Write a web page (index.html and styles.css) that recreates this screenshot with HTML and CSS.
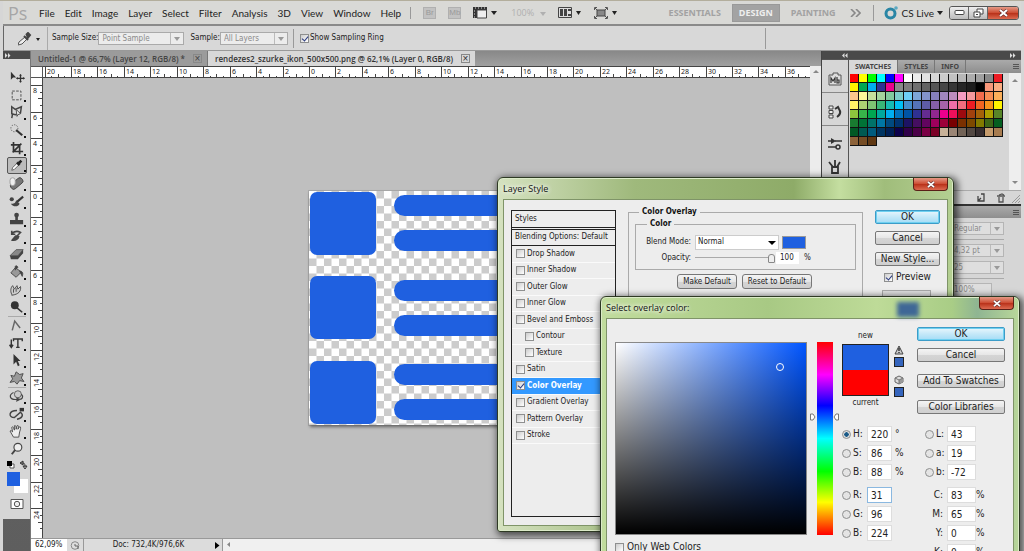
FILE: index.html
```html
<!DOCTYPE html>
<html lang="en">
<head>
<meta charset="utf-8">
<title>Photoshop</title>
<link rel="stylesheet" href="styles.css">
</head>
<body>
<div class="app">
  <header class="menubar">
    <span class="logo">Ps</span>
    <nav class="menu">
      <button>File</button><button>Edit</button><button>Image</button><button>Layer</button><button>Select</button><button>Filter</button><button>Analysis</button><button>3D</button><button>View</button><button>Window</button><button>Help</button>
    </nav>
    <div class="launchers">
      <span class="chip">Br</span>
      <span class="chip">Mb</span>
      <svg class="extras" width="26" height="12" viewBox="0 0 26 12"><path d="M0 0h14v3H4v8H0z" fill="#333"/><path d="M4 3h9.500v8H4z" fill="#eee" stroke="#444"/><path d="M2 1h1m2 0h1m2 0h1m2 0h1M1 4h1M1 7h1M1 10h1" stroke="#ddd"/><path d="M18 4h6l-3 4z" fill="#222"/></svg>
      <span class="zoomlevel">100% <i class="tri"></i></span>
      <svg class="arrange" width="24" height="12" viewBox="0 0 24 12"><path d="M.5.500h13v10H.5z" fill="#ddd" stroke="#444"/><path d="M2 2h3v7H2zM6 2h3v7H6z" fill="#444"/><path d="M10 3h3M10 8h3" stroke="#444" stroke-width="2"/><path d="M18 4h5l-2.500 4z" fill="#222"/></svg>
      <svg class="screen" width="24" height="12" viewBox="0 0 24 12"><path d="M3 3h8v6H3z" fill="#888" stroke="#444"/><path d="M.5 3V.5H3M11 .5h2.500V3M.5 9v2.500H3M11 11.500h2.500V9M1 1l2 2M13 1l-2 2M1 11l2-2M13 11l-2-2" fill="none" stroke="#555"/><path d="M18 4h5l-2.500 4z" fill="#222"/></svg>
    </div>
    <div class="spaces">
      <button>ESSENTIALS</button><button class="current">DESIGN</button><button>PAINTING</button>
      <svg width="11" height="8" viewBox="0 0 11 8"><path d="M1 0l4 4-4 4M6 0l4 4-4 4" fill="none" stroke="#888" stroke-width="1.600"/></svg>
    </div>
    <button class="cslive">
      <svg width="14" height="14" viewBox="0 0 14 14"><circle cx="6.500" cy="7.500" r="4.500" fill="none" stroke="#2a86a5" stroke-width="3"/><circle cx="12" cy="2" r="1.800" fill="#5ba9c2"/></svg>
      CS Live <i class="tri dark"></i>
    </button>
    <div class="winbtns">
      <button aria-label="Minimize"><svg width="11" height="7" viewBox="0 0 11 7"><rect x="1" y="1.500" width="9" height="4" rx="1" fill="#fff" stroke="#444"/></svg></button>
      <button aria-label="Restore"><svg width="11" height="10" viewBox="0 0 11 10"><path d="M4 1h6v5H4z" fill="#fff" stroke="#444"/><path d="M1 4h6v5H1z" fill="#fff" stroke="#444"/><path d="M3 6h2v1H3z" fill="#444"/></svg></button>
      <button class="close" aria-label="Close"><svg width="9" height="8" viewBox="0 0 9 8"><path d="M1 1l7 6M8 1L1 7" stroke="#603030" stroke-width="3.200"/><path d="M1 1l7 6M8 1L1 7" stroke="#fff" stroke-width="2"/></svg></button>
    </div>
  </header>

  <div class="options">
    <div class="optool"><svg width="22" height="14" viewBox="0 0 22 14"><path d="M0 13l1-3 6-5 2 2-5 5z" fill="#eee" stroke="#555"/><path d="M6 4l4 4M8 3l2-2 2 2-3 4" stroke="#444" stroke-width="2" fill="#444"/><path d="M18 6h4l-2 3z" fill="#222"/></svg></div>
    <label for="size">Sample Size:</label>
    <span class="dd wide"><select id="size"><option>Point Sample</option></select></span>
    <label class="sp" for="sample">Sample:</label>
    <span class="dd"><select id="sample"><option>All Layers</option></select></span>
    <div class="ring"><input type="checkbox" id="ring" checked><label for="ring">Show Sampling Ring</label></div>
    <span class="optend"></span>
  </div>

  <main class="work">
    <aside class="tools">
      <div class="darkbar"><svg width="6" height="5" viewBox="0 0 6 5"><path d="M0 0l2.500 2.500L0 5zM3 0l2.500 2.500L3 5z" fill="#ddd"/></svg></div>
      <div class="toolgrid" id="toolgrid">
        <button aria-label="Move"><svg viewBox="0 0 20 16"><path d="M3 2v9l2.500-2.500H9z" fill="#333"/><path d="M14 5v9M9.500 9.500h9" stroke="#333" stroke-width="1.500"/><path d="M12.500 6.500L14 4.500l1.500 2zM12.500 12.500l1.500 2 1.500-2zM11 8l-2 1.500 2 1.500zM17 8l2 1.500-2 1.500z" fill="#333"/></svg></button>
        <button class="more" aria-label="Marquee"><svg viewBox="0 0 20 16"><path d="M4.500 3.500h10v10h-10z" fill="none" stroke="#444" stroke-dasharray="3 1.500"/></svg></button>
        <button class="more" aria-label="Lasso"><svg viewBox="0 0 20 16"><path d="M4 2l4 3 7-3-1 7-6 2-4-1zM5 10l-1 5" fill="none" stroke="#444" stroke-width="1.700"/><path d="M9 5l5 5-3 1-1 2z" fill="#eee" stroke="#444"/></svg></button>
        <button class="more" aria-label="Quick selection"><svg viewBox="0 0 20 16"><circle cx="7" cy="6" r="4" fill="none" stroke="#555" stroke-dasharray="1.500 1.500"/><path d="M9 8l7 6" stroke="#333" stroke-width="2.400"/></svg></button>
        <button class="more" aria-label="Crop"><svg viewBox="0 0 20 16"><path d="M6 1v11h11M3 4.500h10V15M5 13L15 3" fill="none" stroke="#333" stroke-width="1.900"/></svg></button>
        <button class="more on" aria-label="Eyedropper"><svg viewBox="0 0 20 16"><path d="M4 14l1-3 5-5 2 2-5 5z" fill="#fff" stroke="#555"/><path d="M10 5l3 3M12 6l3-3" stroke="#222" stroke-width="3"/></svg></button>
        <button class="more" aria-label="Healing"><svg viewBox="0 0 20 16"><rect x="2" y="5" width="16" height="7" rx="3" transform="rotate(-40 10 9)" fill="#777" stroke="#444"/><rect x="2" y="2" width="6" height="9" rx="3" fill="#eee" stroke="#999"/></svg></button>
        <button class="more" aria-label="Brush"><svg viewBox="0 0 20 16"><path d="M17 3l-7 6" stroke="#333" stroke-width="2.400"/><path d="M3 11c3 4 8 4 10 0L9 7c-1 4-3 4-6 4z" fill="#444"/><circle cx="4" cy="6" r="2.400" fill="#444"/></svg></button>
        <button class="more" aria-label="Stamp"><svg viewBox="0 0 20 16"><path d="M2 9h15v5H2zM8 4h3v5H8z" fill="#444"/><circle cx="9.500" cy="3.500" r="2.700" fill="#444"/></svg></button>
        <button class="more" aria-label="History brush"><svg viewBox="0 0 20 16"><path d="M4 5c4-3 7-3 10-1l-8 8M4 2v4h4" fill="none" stroke="#444" stroke-width="1.900"/><path d="M3 13c4 2 9 0 10-5L8 7z" fill="#444"/></svg></button>
        <button class="more" aria-label="Eraser"><svg viewBox="0 0 20 16"><path d="M2 10l7-7h8l-6 7z" fill="#888" stroke="#555"/><path d="M2 10h9v4H3zM11 10l6-7v4l-6 7z" fill="#444"/></svg></button>
        <button class="more" aria-label="Paint bucket"><svg viewBox="0 0 20 16"><path d="M3 9l5-6 7 5-6 6z" fill="#999" stroke="#444"/><path d="M8 6V2c0-2 3-1 3 1M13 7c4 0 4 3 3 6l-2-4z" fill="#444" stroke="#444"/></svg></button>
        <button class="more" aria-label="Smudge"><svg viewBox="0 0 20 16"><path d="M4 13c-2-4-1-8 1-10l2 4 3-4 1 4 3-3c1 5-2 9-10 10z" fill="#ccc" stroke="#444"/><path d="M6 7v4M9 6v4" stroke="#444"/></svg></button>
        <button class="more" aria-label="Burn"><svg viewBox="0 0 20 16"><circle cx="7.500" cy="6" r="4.500" fill="#333"/><path d="M10 9l6 5" stroke="#333" stroke-width="1.800"/></svg></button>
        <button class="more cut" aria-label="Pen"><svg viewBox="0 0 20 16"><path d="M6 14V3l8 6" fill="none" stroke="#666" stroke-width="1.700" transform="rotate(15 9 8)"/></svg></button>
        <button class="more" aria-label="Type"><svg viewBox="0 0 20 16"><path d="M3.500 4v9m-2-3l2 3 2-3M6 6V3.500h10V6M11 3.500v9.500M9 13h4" fill="none" stroke="#333" stroke-width="1.600"/></svg></button>
        <button class="more" aria-label="Path selection"><svg viewBox="0 0 20 16"><path d="M6 1v12l3-3 2 5 2-1-2-5h3z" fill="#333"/></svg></button>
        <button class="more" aria-label="Shape"><svg viewBox="0 0 20 16"><path d="M3 5l4 1 2-5 4 3 4-1-2 5 3 4-5-1-3 4-3-3-5 1 3-4z" fill="#999" stroke="#444" stroke-linejoin="round"/></svg></button>
        <button class="more cut" aria-label="3D rotate"><svg viewBox="0 0 20 16"><circle cx="11" cy="6" r="4" fill="#ccc" stroke="#555"/><path d="M6 4C0 7 2 12 8 12h4m-3-2l4 2-4 2M15 6c3 3 1 6-3 6" fill="none" stroke="#444" stroke-width="1.400"/></svg></button>
        <button class="more" aria-label="3D camera"><svg viewBox="0 0 20 16"><path d="M10 4C0 4 0 12 7 12l7-6c4 3 2 7-4 8" fill="none" stroke="#444" stroke-width="1.600"/><path d="M13 1h5v4h-5z" fill="#333"/></svg></button>
        <button class="more" aria-label="Hand"><svg viewBox="0 0 20 16"><path d="M6 15L2 8c1-1 2 0 3 1L4 4c1-2 2 0 3 3V2c1-1 2 0 2 4l1-4c2-1 2 1 1 4l2-3c2 0 1 3 0 6l-1 6z" fill="#eee" stroke="#444"/></svg></button>
        <button aria-label="Zoom"><svg viewBox="0 0 20 16"><circle cx="11" cy="6" r="4.500" fill="#eee" stroke="#444" stroke-width="1.300"/><path d="M8 9l-4 5" stroke="#444" stroke-width="2.200"/></svg></button>
      </div>
      <div class="colors">
        <svg width="22" height="50" viewBox="0 0 22 50"><path d="M3 4h4v4H3z" fill="#fff" stroke="#555"/><path d="M0 1h5v5H0z" fill="#000"/><path d="M14 3h2c2 0 2 2 2 4M13 3l3-2v4zM16 6h4l-2 3z" fill="none" stroke="#333"/><path d="M7 19h14v14H7z" fill="#fff"/><path d="M0 12h13v14H0z" fill="#1f60e0"/><path d="M4 39.500h12v9H4z" fill="#fff" stroke="#555"/><circle cx="10" cy="44" r="2.700" fill="#eee" stroke="#555"/></svg>
      </div>
    </aside>

    <section class="doc">
      <div class="tabs">
        <div class="tab"><span>Untitled-1 @ 66,7% (Layer 12, RGB/8) *</span><button aria-label="Close tab">×</button></div>
        <div class="tab active"><span>rendezes2_szurke_ikon_500x500.png @ 62,1% (Layer 0, RGB/8)</span><button aria-label="Close tab">×</button></div>
      </div>
      <div class="view">
        <div class="corner"></div>
        <svg class="hruler" id="hruler"></svg>
        <svg class="vruler" id="vruler"></svg>
        <div class="canvas">
          <svg class="art" width="234" height="234" viewBox="0 0 234 234">
            <defs><pattern id="chk" width="15" height="15" patternUnits="userSpaceOnUse"><path d="M0 0h15v15H0z" fill="#fff"/><path d="M7.500 0H15v7.500H7.500zM0 7.500h7.500V15H0z" fill="#ccc"/></pattern></defs>
            <rect width="234" height="234" fill="url(#chk)"/>
            <g fill="#1f60e0"><rect x="1" y="1" width="66" height="63" rx="7"/><rect x="1" y="85" width="66" height="63" rx="7"/><rect x="1" y="170" width="66" height="63" rx="7"/>
            <rect x="85" y="4" width="149" height="21" rx="10.500"/><rect x="85" y="39" width="149" height="21" rx="10.500"/><rect x="85" y="89" width="149" height="21" rx="10.500"/><rect x="85" y="124" width="149" height="21" rx="10.500"/><rect x="85" y="173" width="149" height="21" rx="10.500"/><rect x="85" y="208" width="149" height="21" rx="10.500"/></g>
          </svg>
        </div>
        <div class="vscroll"><i class="up"></i></div>
      </div>
      <footer class="status">
        <input aria-label="Zoom" value="62,09%">
        <svg width="16" height="9" viewBox="0 0 16 9"><circle cx="8" cy="4.500" r="3.800" fill="#ddd" stroke="#888"/><path d="M8 3v2h3v3" fill="none" stroke="#666"/></svg>
        <span class="docsize">Doc: 732,4K/976,6K</span>
        <button aria-label="Status menu"><svg width="5" height="7" viewBox="0 0 5 7"><path d="M0 0l4.500 3.500L0 7z" fill="#000"/></svg></button>
        <span class="hscroll"><svg width="3" height="5" viewBox="0 0 3 5"><path d="M3 0L0 2.500 3 5z" fill="#888"/></svg></span>
      </footer>
    </section>

    <aside class="dock">
      <div class="darkbar split"><svg width="6" height="5" viewBox="0 0 6 5"><path d="M2.500 0L0 2.500 2.500 5zM5.500 0L3 2.500 5.500 5z" fill="#ddd"/></svg><svg width="6" height="5" viewBox="0 0 6 5"><path d="M0 0l2.500 2.500L0 5zM3 0l2.500 2.500L3 5z" fill="#ddd"/></svg></div>
      <div class="iconcol">
        <div><svg width="14" height="14" viewBox="0 0 14 14"><path d="M1 3h4V1h5v2h3v10H1z" fill="#ddd" stroke="#555"/><path d="M3 11V6l2 3 2-3v5M9 5v6h2V8H9" fill="none" stroke="#333" stroke-width="1.200"/></svg></div>
        <div><svg width="14" height="14" viewBox="0 0 14 14"><path d="M1 1h4v3H1zM1 5.500h4v3H1zM1 10h4v3H1z" fill="#eee" stroke="#444"/><path d="M7 4l3-2 1 2c2 3 1 6-2 8" fill="none" stroke="#333" stroke-width="2"/></svg></div>
        <div class="two"><svg width="14" height="12" viewBox="0 0 14 12"><path d="M0 3h5M7 3h7M0 9h8" stroke="#333" stroke-width="1.500"/><path d="M3 0l5 3-5 3z" fill="#333"/><circle cx="10" cy="9" r="2" fill="none" stroke="#333" stroke-width="1.500"/></svg><svg width="14" height="14" viewBox="0 0 14 14"><path d="M4 7h6v6H4zM5 7L1 2M7 7V0M9 7l3-5" fill="none" stroke="#333" stroke-width="1.800"/></svg></div>
      </div>
      <div class="panels">
        <div class="ptabs"><button class="active">SWATCHES</button><button>STYLES</button><button>INFO</button><i class="pmenu"></i></div>
        <div class="swatchpanel"><div class="swatches" id="swatches"></div><div class="sscroll"><i class="up"></i><i class="down"></i></div></div>
        <div class="pfoot"><svg width="46" height="10" viewBox="0 0 46 10"><path d="M3 3v5h6V1h-3M3 8l3-3" fill="none" stroke="#444" stroke-width="1.300"/><path d="M22 3h8M24 4v5h4V4M24 2l3-1 2 1" fill="none" stroke="#555" stroke-width="1.300"/><path d="M37 10l8-8M40 10l5-5M43 10l2-2" stroke="#999"/></svg></div>
        <div class="ptabs lower"><i class="pmenu"></i></div>
        <div class="character">
          <span class="dd"><select aria-label="Font style"><option>Regular</option></select></span>
          <hr>
          <span class="dd"><select aria-label="Leading"><option>4,32 pt</option></select></span>
          <span class="dd"><select aria-label="Tracking"><option>25</option></select></span>
          <hr>
          <input aria-label="Horizontal scale" value="100%">
        </div>
      </div>
    </aside>
  </main>

  <section class="dialog layerstyle" aria-label="Layer Style">
    <div class="title"><h2>Layer Style</h2><button class="close" aria-label="Close"><svg width="8" height="7" viewBox="0 0 9 8"><path d="M1 1l7 6M8 1L1 7" stroke="#603030" stroke-width="3.200"/><path d="M1 1l7 6M8 1L1 7" stroke="#fff" stroke-width="2"/></svg></button></div>
    <div class="body">
      <div class="stylelist">
        <div class="shead">Styles</div>
        <div class="sblend">Blending Options: Default</div>
        <div class="sitems">
          <label><input type="checkbox">Drop Shadow</label>
          <label><input type="checkbox">Inner Shadow</label>
          <label><input type="checkbox">Outer Glow</label>
          <label><input type="checkbox">Inner Glow</label>
          <label><input type="checkbox">Bevel and Emboss</label>
          <label class="sub"><input type="checkbox">Contour</label>
          <label class="sub"><input type="checkbox">Texture</label>
          <label><input type="checkbox">Satin</label>
          <label class="sel"><input type="checkbox" checked>Color Overlay</label>
          <label><input type="checkbox">Gradient Overlay</label>
          <label><input type="checkbox">Pattern Overlay</label>
          <label><input type="checkbox">Stroke</label>
        </div>
      </div>
      <fieldset class="outer">
        <legend>Color Overlay</legend>
        <fieldset class="inner">
          <legend>Color</legend>
          <div class="frow"><label for="blend">Blend Mode:</label><span class="blend"><select id="blend"><option>Normal</option></select></span><button class="chipcolor" aria-label="Overlay color"></button></div>
          <div class="frow"><label for="op">Opacity:</label><input type="range" id="op" value="100"><input class="num" aria-label="Opacity value" value="100"><span>%</span></div>
        </fieldset>
        <div class="defaults"><button class="btn small">Make Default</button><button class="btn small">Reset to Default</button></div>
      </fieldset>
      <div class="actions">
        <button class="btn primary">OK</button><button class="btn">Cancel</button><button class="btn">New Style...</button>
        <label class="preview"><input type="checkbox" checked>Preview</label>
        <div class="thumb"></div>
      </div>
    </div>
  </section>

  <section class="dialog picker" aria-label="Select overlay color">
    <div class="title"><h2>Select overlay color:</h2><i class="glass"></i><button class="close" aria-label="Close"><svg width="8" height="7" viewBox="0 0 9 8"><path d="M1 1l7 6M8 1L1 7" stroke="#603030" stroke-width="3.200"/><path d="M1 1l7 6M8 1L1 7" stroke="#fff" stroke-width="2"/></svg></button></div>
    <div class="body">
      <div class="fieldcol">
        <div class="field"><i class="cursor"></i></div>
        <label class="web"><input type="checkbox">Only Web Colors</label>
      </div>
      <div class="hue">
        <svg class="marks" width="29" height="8" viewBox="0 0 29 8"><path d="M.5 1h2.500l2 3-2 3H.5zM28.500 1H26l-2 3 2 3h2.500z" fill="#fff" stroke="#777"/></svg>
      </div>
      <div class="values">
        <div class="top">
          <div class="compare"><span>new</span><div class="chips"><i></i><i></i></div><span>current</span></div>
          <div class="warns">
            <svg width="10" height="10" viewBox="0 0 10 10"><path d="M5 1l4 8H1z" fill="#ccc" stroke="#444"/><path d="M5 3v3M5 7v1" stroke="#222" stroke-width="1.300"/></svg><i></i>
            <svg width="10" height="10" viewBox="0 0 10 10"><path d="M1 3l4-2 4 2v4L5 9 1 7z" fill="#ddd" stroke="#666"/><path d="M5 5v4l4-2V3z" fill="#999"/><path d="M1 3l4 2 4-2M5 5v4" fill="none" stroke="#777"/></svg><i></i>
          </div>
          <div class="pbtns"><button class="btn primary">OK</button><button class="btn">Cancel</button><button class="btn gap">Add To Swatches</button><button class="btn gap">Color Libraries</button></div>
        </div>
        <div class="nums">
          <div class="numcol">
            <div class="nr"><input type="radio" name="c" id="h" checked><label for="h">H:</label><input aria-label="Hue" value="220"><span>°</span></div>
            <div class="nr"><input type="radio" name="c" id="s"><label for="s">S:</label><input aria-label="Saturation" value="86"><span>%</span></div>
            <div class="nr"><input type="radio" name="c" id="b"><label for="b">B:</label><input aria-label="Brightness" value="88"><span>%</span></div>
            <div class="nr brk"><input type="radio" name="c" id="r"><label for="r">R:</label><input class="focus" aria-label="Red" value="31"></div>
            <div class="nr"><input type="radio" name="c" id="g"><label for="g">G:</label><input aria-label="Green" value="96"></div>
            <div class="nr"><input type="radio" name="c" id="bl"><label for="bl">B:</label><input aria-label="Blue" value="224"></div>
          </div>
          <div class="numcol right">
            <div class="nr"><input type="radio" name="c" id="l"><label for="l">L:</label><input aria-label="Lightness" value="43"></div>
            <div class="nr"><input type="radio" name="c" id="la"><label for="la">a:</label><input aria-label="Lab a" value="19"></div>
            <div class="nr"><input type="radio" name="c" id="lb"><label for="lb">b:</label><input aria-label="Lab b" value="-72"></div>
            <div class="nr brk cmyk"><label for="cc">C:</label><input id="cc" value="83"><span>%</span></div>
            <div class="nr cmyk"><label for="cm">M:</label><input id="cm" value="65"><span>%</span></div>
            <div class="nr cmyk"><label for="cy">Y:</label><input id="cy" value="0"><span>%</span></div>
            <div class="nr cmyk"><label for="ck">K:</label><input id="ck" value="0"><span>%</span></div>
          </div>
        </div>
      </div>
    </div>
  </section>
</div>
<script src="script.js"></script>
</body>
</html>
```
FILE: styles.css
```css
* { box-sizing: border-box; }
body { margin: 0; font: 8px/12px "DejaVu Sans Condensed", "DejaVu Sans", sans-serif; color: #222; overflow: hidden; }
button, input, select { font: inherit; color: inherit; margin: 0; padding: 0; border: 0; background: none; border-radius: 0; }
svg { display: block; flex: none; }
.app { position: relative; height: 100vh; overflow: hidden; background: #d6d6d6; display: flex; flex-direction: column; padding: 0 3px; border-top: 1px solid #b3ae9c; }

.menubar { flex: none; display: flex; align-items: center; height: 25px; border-bottom: 2px solid #8a8a8a; background: #d9d9d6; font: 10px/16px Lato, "Open Sans", sans-serif; }
.menubar > * { flex: none; }
.logo { width: 36px; padding-left: 5px; font: 18px/20px "Open Sans", sans-serif; color: #a6a6a6; }
.menu { display: flex; gap: 10px; }
.launchers { display: flex; align-items: center; gap: 12px; margin-left: 9px; padding-left: 12px; border-left: 1px solid #999; }
.chip { width: 13px; height: 12px; background: #c2c2c2; border: 1px solid #b0b0b0; color: #9a9a9a; font: 8px/10px "Liberation Sans", sans-serif; text-align: center; }
.zoomlevel { font: 9px/12px "Open Sans", sans-serif; color: #b0b0b0; white-space: nowrap; }
.tri { display: inline-block; border: 3px solid transparent; border-top: 4px solid #b0b0b0; border-bottom: 0; margin-left: 4px; }
.tri.dark { border-top-color: #222; margin-left: 0; }
.menubar .spaces { margin-left: auto; display: flex; align-items: center; gap: 11px; font: bold 9px/17px "Noto Sans", sans-serif; color: #a2a2a2; }
.spaces .current { background: #a3a3a3; color: #eee; border: 1px solid #999; padding: 0 6px; height: 18px; line-height: 16px; }
.spaces svg { margin-left: 4px; }
.cslive { display: flex; align-items: center; gap: 3px; margin-left: 12px; padding-left: 10px; border-left: 1px solid #999; white-space: nowrap; }
.winbtns { display: flex; margin: 0 2px 0 6px; border: 1px solid #555; border-radius: 3px; overflow: hidden; }
.winbtns button { flex: none; width: 19px; height: 12px; display: grid; place-items: center; background: linear-gradient(#eee, #bbb); border-right: 1px solid #666; }
.winbtns .close { width: 30px; border: 0; }
.close, .winbtns .close { background: linear-gradient(#e59a86, #cc4a30 50%, #b83018 51%, #dc6a50); }

.options { flex: none; display: flex; align-items: center; height: 25px; border-bottom: 1px solid #999; border-left: 1px solid #666; background: #d8d8d8; }
.optool { width: 44px; height: 23px; padding: 5px 0 0 14px; border-right: 1px solid #aaa; margin-right: 4px; }
.dd { position: relative; display: inline-block; width: 68px; height: 13px; border: 1px solid #aaa; background: #ececec; }
.dd.wide { width: 86px; }
.dd select { appearance: none; width: 100%; height: 11px; padding: 0 3px; color: #8a8a8a; display: block; }
.dd::after { content: ""; position: absolute; right: 3px; top: 4px; border: 3px solid transparent; border-top: 4px solid #999; border-bottom: 0; }
.dd::before { content: ""; position: absolute; right: 12px; top: 0; height: 11px; border-left: 1px solid #bbb; }
.sp { margin-left: 6px; }
.ring { display: flex; align-items: center; gap: 1px; height: 19px; margin-left: 5px; padding-left: 6px; border-left: 1px solid #999; }
.optend { margin-left: auto; height: 21px; width: 256px; border-left: 1px solid #999; }
input[type=checkbox] { appearance: none; flex: none; position: relative; width: 9px; height: 9px; border: 1px solid #8e8f8f; background: linear-gradient(135deg, #ccc, #fff); }
input[type=checkbox]:checked::before { content: ""; position: absolute; left: 2px; top: 0; width: 3px; height: 5px; border: solid #2a3a80; border-width: 0 1px 1px 0; transform: rotate(40deg); }

.work { flex: 1; min-height: 0; display: grid; grid-template-columns: 28px 1fr 200px; }
.darkbar { height: 8px; background: #4a4a4a; padding: 2px; }
.darkbar.split { grid-column: 1 / 3; display: flex; justify-content: space-between; padding: 2px 5px 0 20px; }
.tools { background: linear-gradient(#6a6a6a, #5e5e5e); border-right: 1px solid #777; min-height: 0; }
.toolgrid { display: grid; grid-auto-rows: 1fr; height: 399px; padding: 9px 4px 0; background: #d6d6d6; }
.toolgrid button { position: relative; display: grid; place-items: center; margin: 0 1px; }
.toolgrid svg { width: 18px; height: 14px; }
.toolgrid .more::after { content: ""; position: absolute; right: 0; bottom: 1px; border: 1px solid #111; }
.toolgrid .on { border: 1px solid #555; border-radius: 2px; background: #bcbcbc; margin: 0; }
.toolgrid .cut { border-top: 1px solid #aaa; }
.colors { background: #d6d6d6; padding: 2px 0 9px 4px; }

.doc { min-width: 0; display: flex; flex-direction: column; min-height: 0; background: #bfbfbf; }
.tabs { flex: none; display: flex; height: 15px; background: linear-gradient(#888, #a0a0a0); white-space: nowrap; font: 600 8px/14px "Open Sans", sans-serif; }
.tab { display: flex; align-items: center; gap: 8px; padding: 0 5px 0 7px; color: #444; background: #9b9b9b; }
.tab.active { background: #d8d8d8; color: #333; border-left: 1px solid #777; }
.tab button { width: 9px; height: 9px; border: 1px solid #888; font: 10px/6px "Liberation Sans", sans-serif; }
.view { flex: 1; min-height: 0; display: grid; grid-template: 12px 1fr / 12px 1fr 11px; }
.corner { background: #fff; border: solid #555; border-width: 1px 1px 1px 0; }
.hruler, .vruler { width: 100%; height: 100%; min-height: 0; background: #fff; overflow: hidden; }
.hruler { border-top: 1px solid #444; border-bottom: 1px solid #444; }
.vruler { border-right: 1px solid #444; grid-row: 2; grid-column: 1; }
.ruler-text { font: 7px "Noto Sans", sans-serif; fill: #222; }
.canvas { grid-row: 2; grid-column: 2; overflow: hidden; padding: 113px 0 0 266px; }
.art { box-shadow: 1px 2px 3px #666, 0 0 0 1px #aaa; }
.vscroll { grid-row: 1 / 3; grid-column: 3; background: #ececec; padding: 4px 3px; }
.up, .down { display: block; border: 3px solid transparent; border-bottom: 3px solid #888; border-top: 0; }
.down { border-bottom: 0; border-top: 3px solid #888; }
.status { flex: none; display: flex; align-items: center; height: 13px; background: #dcdcdc; border-top: 1px solid #999; }
.status input { width: 36px; height: 12px; background: #fff; padding-left: 4px; }
.docsize { width: 130px; border-left: 1px solid #999; text-align: center; }
.status button { width: 9px; height: 12px; display: grid; place-items: center; }
.hscroll { flex: 1; height: 12px; background: #f0f0f0; border-left: 1px solid #999; padding: 3px 4px; }

.dock { display: grid; grid-template: 8px 1fr / 27px 1fr; min-height: 0; background: #d6d6d6; border-left: 1px solid #444; }
.iconcol { border-right: 1px solid #555; border-top: 1px solid #555; }
.iconcol div { height: 33px; display: flex; flex-direction: column; align-items: center; padding-top: 12px; border-bottom: 1px solid #888; }
.iconcol .two { height: 58px; gap: 10px; }
.panels { min-width: 0; }
.ptabs { display: flex; height: 14px; background: linear-gradient(#aaa, #8e8e8e); font: bold 7px/13px "Noto Sans", sans-serif; color: #444; border-top: 1px solid #555; }
.ptabs button { padding: 0 6px; border-right: 1px solid #777; }
.ptabs .active { background: #d8d8d8; }
.pmenu { margin: 4px 2px 0 auto; width: 6px; height: 5px; border: solid #555; border-width: 1px 0; background: linear-gradient(transparent 1px, #555 1px, #555 2px, transparent 2px); }
.swatchpanel { display: flex; justify-content: space-between; height: 117px; padding-left: 1px; }
.swatches { display: grid; grid-template-columns: repeat(17, 9px); grid-auto-rows: 9px; align-content: start; padding-top: 1px; }
.swatches i { border: solid #111; border-width: 0 1px 1px 0; }
.sscroll { width: 12px; background: #eee; display: flex; flex-direction: column; justify-content: space-between; padding: 6px 3px; }
.pfoot { height: 14px; border-top: 1px solid #aaa; display: flex; justify-content: flex-end; padding-top: 2px; }
.ptabs.lower { border-top: 2px solid #333; }
.character { display: flex; flex-direction: column; align-items: flex-end; padding: 4px 17px 0 0; gap: 4px; }
.character hr { width: 100%; margin: 0; border: 0; border-top: 1px solid #aaa; }
.character .dd, .character > input { width: 54px; border: 1px solid #b5b5b5; background: #dedede; color: #888; }
.character > input { width: 42px; margin-right: 12px; padding-left: 3px; }

.dialog { position: absolute; border: 1px solid #2e3a24; border-radius: 6px 6px 3px 3px; padding: 0 5px 5px; background: #a9c389; box-shadow: 0 0 0 1px #dcebc8 inset, 2px 2px 7px 2px rgba(0,0,0,.6); display: flex; flex-direction: column; }
.layerstyle { left: 497px; top: 176px; width: 457px; height: 355px; background: linear-gradient(90deg, #d5e2c0, #9fb97c 30%, #8eab68 65%, #c4dea0 75%, #a0bd7b 85%, #b4cf92); }
.picker { left: 600px; top: 295px; width: 420px; height: 280px; background: linear-gradient(90deg, #c1dc9d, #a8c984 40%, #bedb98 66%, #a9cd86 84%, #8fb592 90%, #b9d79a); }
.title { display: flex; align-items: center; justify-content: space-between; height: 21px; }
.title h2 { margin: 0; font: 9px/14px "Open Sans", sans-serif; color: #111; text-shadow: 0 0 5px #fff, 0 0 5px #fff; }
.title .close { width: 35px; height: 13px; align-self: flex-start; border: 1px solid #5a2018; border-top: 0; border-radius: 0 0 4px 4px; display: grid; place-items: center; }
.glass { width: 22px; height: 15px; margin: 4px 60px 0 auto; background: #3f6796; filter: blur(2px); }
.dialog .body { flex: 1; min-height: 0; display: flex; background: #ededed; border: 1px solid #7f9468; padding: 9px 7px 8px 7px; }
.btn { height: 14px; border: 1px solid #777; border-radius: 2px; background: linear-gradient(#f4f4f4, #e6e6e6 50%, #d5d5d5 51%, #cfcfcf); font-size: 10px; line-height: 12px; white-space: nowrap; }
.btn.primary { border-color: #3c9cc8; background: linear-gradient(#e8f6fd, #c4e8f8 50%, #a4dcf6); box-shadow: 0 0 0 1px #6fd0f0 inset; }
.btn.small { font-size: 8px; height: 15px; padding: 0 5px; border-radius: 3px; }

.layerstyle .body { padding-top: 10px; }
.stylelist { width: 105px; border: 1px solid #222; }
.shead { height: 17px; padding: 2px 3px; border-bottom: 1px solid #222; }
.sblend { height: 17px; margin-top: 1px; padding: 1px 3px; border: solid #222; border-width: 1px 0; }
.sitems { display: grid; grid-auto-rows: 1fr; height: 198px; }
.sitems label { display: flex; align-items: center; gap: 2px; padding-left: 4px; border-bottom: 1px solid #fafafa; }
.sitems .sub { padding-left: 13px; }
.sitems .sel { background: #3399ff; color: #fff; font-weight: bold; }
fieldset { margin: 0; min-width: 0; border: 1px solid #aaa; }
legend { font-weight: bold; padding: 0 3px; color: #111; }
.outer { width: 235px; margin: -4px 12px 0 12px; padding: 0 6px; height: 305px; }
.inner { padding: 4px 4px 3px 6px; }
.outer legend { margin-left: 4px; }
.inner legend { margin-left: 5px; }
.frow { display: flex; align-items: center; height: 16px; }
.frow label { width: 49px; text-align: right; margin-right: 4px; }
.blend { position: relative; width: 84px; height: 15px; background: #fff; border: 1px solid #ccc; }
.blend select { appearance: none; width: 100%; padding-left: 2px; height: 13px; display: block; }
.blend::after { content: ""; position: absolute; right: 2px; top: 5px; border: 4px solid transparent; border-top: 4px solid #000; border-bottom: 0; }
.chipcolor { width: 24px; height: 13px; margin-left: 3px; background: #1f60e0; border: 1px solid #999; }
.frow input[type=range] { appearance: none; width: 80px; height: 12px; background: linear-gradient(transparent 5px, #aaa 5px, #aaa 6px, transparent 6px); }
.frow input[type=range]::-webkit-slider-thumb { appearance: none; width: 7px; height: 9px; background: #eee; border: 1px solid #888; border-radius: 3px 3px 1px 1px; }
.num { width: 23px; height: 12px; background: #fff; padding-left: 4px; margin: 0 5px 0 1px; }
.defaults { display: flex; justify-content: flex-end; gap: 5px; padding: 4px 44px 0 0; }
.actions { display: flex; flex-direction: column; flex: 1; gap: 7px; }
.preview { display: flex; align-items: center; gap: 3px; padding-left: 9px; height: 12px; margin-top: -2px; font-size: 10px; }
.thumb { margin: 0 9px 0 7px; height: 50px; border: 1px solid #aaa; background: #e2e2e2; }

.picker .body { padding: 23px 8px 0 8px; }
.field { position: relative; width: 192px; height: 193px; border: 1px solid #888; background: linear-gradient(transparent, #000), linear-gradient(90deg, #fff, #0055ff); }
.cursor { position: absolute; left: 160px; top: 20px; width: 8px; height: 8px; border: 1px solid #fff; border-radius: 50%; }
.web { display: flex; align-items: center; gap: 3px; margin-top: 6px; font-size: 10px; }
.hue { position: relative; width: 16px; height: 193px; margin-left: 10px; background: linear-gradient(#f00, #f0f 17%, #00f 33%, #0ff 50%, #0f0 67%, #ff0 83%, #f00); }
.marks { position: absolute; left: -7px; top: 71px; }
.values { flex: 1; margin: -11px 0 0 9px; min-width: 0; }
.top { display: flex; }
.compare { width: 47px; text-align: center; line-height: 10px; }
.chips { height: 52px; border: 1px solid #222; display: grid; margin: 3px 0 2px; }
.chips i:first-child { background: #1f60e0; }
.chips i:last-child { background: #f00; }
.warns { width: 10px; margin: 14px 0 0 5px; display: flex; flex-direction: column; gap: 2px; }
.warns i { width: 10px; height: 10px; border: 1px solid #222; background: #3565bd; margin-bottom: 6px; }
.pbtns { flex: 1; margin: -4px 0 0 13px; display: flex; flex-direction: column; gap: 7px; }
.pbtns .gap { margin-top: 5px; }
.nums { display: flex; margin-top: 12px; font-size: 10px; }
.numcol { display: flex; flex-direction: column; gap: 3px; width: 85px; }
.numcol.right { margin-left: 3px; }
.nr { display: flex; align-items: center; height: 16px; flex: none; }
.nr label { width: 16px; padding-left: 2px; }
.nr input:not([type=radio]) { width: 25px; height: 16px; background: #fff; border: 1px solid #ddd; padding-left: 3px; margin-right: 3px; }
.nr .focus:not([type=radio]) { border-color: #8ab8e0; }
.nr input[type=radio] { appearance: none; flex: none; width: 9px; height: 9px; border: 1px solid #8e8f8f; border-radius: 50%; background: #e4e4e4; }
.nr input[type=radio]:checked { background: radial-gradient(#1a5a88 40%, #ddd 50%); }
.right .nr input:not([type=radio]) { width: 29px; margin-right: 0; }
.nr.brk { margin-top: 4px; }
.right .nr label { width: 13px; }
.right .cmyk label { width: 22px; padding: 0 4px 0 0; text-align: right; }
```
FILE: script.js
```js
const swatchRows = [
  "ff0000 ffff00 00ff00 00ffff 0000ff ff00ff ffffff ebebeb e1e1e1 d7d7d7 cccccc c2c2c2 b7b7b7 acacac a0a0a0 898989 ed1c24",
  "fff200 00a651 00aeef 2e3192 ec008c 898989 7d7d7d 707070 626262 555555 464646 363636 262626 1c1c1c 000000 f7977a fbad82",
  "fdc68c fff799 c6df9c a4d49d 81ca9d 7bcdc9 6dcff6 7ca6d8 8393ca 8781bd a186be bd8cbf f49bc1 f5999d f16c4d f68e54 fbaf5a",
  "fff467 acd372 7dc473 39b778 16bcb4 00bff3 438cca 5573b7 5e5ca7 855fa8 a763a9 ef6ea8 f16d7e ee1d24 f16522 f7941d fff100",
  "8fc63d 37b44a 00a650 00a99e 00aeef 0072bc 0054a5 2f3192 652c91 91278f ed008c ee105a 9d0a0f a1410d a36209 aba000 588528",
  "197b30 007236 00736a 0076a4 004a80 003370 1d1363 450e61 62055f 9e005c 9d0039 790000 7b3000 7c4900 827a00 3e6617 045f20",
  "005824 005951 005b7e 003562 002056 0c004b 30004a 4b0048 7a0045 7a0026 c7b198 9a8575 726357 524843 372e30 c69c6d a77c50",
  "8c6239 754c24 603813"
];
document.getElementById("swatches").innerHTML = swatchRows.join(" ").split(" ")
  .map(c => `<i style="background:#${c}"></i>`).join("");

const unit = 26.44;
function ruler(id, origin, from, to, vertical) {
  let ticks = "", labels = "";
  for (let n = from; n <= to; n += 2) {
    const p = Math.round(origin + n / 2 * unit);
    const text = Math.abs(n);
    for (let k = 0; k < 4; k++) {
      const q = Math.round(origin + (n / 2 + k / 4) * unit) + 0.5;
      const start = k === 0 ? 0 : k === 2 ? 7 : 9;
      ticks += vertical ? `M${start} ${q}H12` : `M${q} ${start}V12`;
    }
    if (!vertical) labels += `<text class="ruler-text" x="${p + 2}" y="7">${text}</text>`;
    else if (text < 10) labels += `<text class="ruler-text" x="2" y="${p + 8}">${text}</text>`;
    else labels += `<text class="ruler-text" transform="translate(8 ${p + 11}) rotate(-90)">${text}</text>`;
  }
  document.getElementById(id).innerHTML = `<path d="${ticks}" stroke="#444" fill="none"/>${labels}`;
}
ruler("hruler", 266, -20, 36, false);
ruler("vruler", 113, -8, 24, true);
```
